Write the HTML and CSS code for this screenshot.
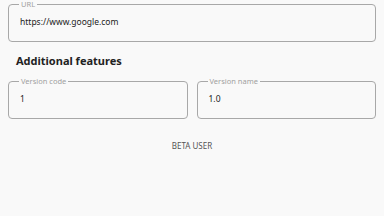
FILE: index.html
```html
<!DOCTYPE html>
<html>
  <head>
    <meta charset="UTF-8">
    <title>Settings</title>
    <link rel="stylesheet" href="styles.css">
  </head>
  <body>
    <div class="page">
      <fieldset class="field">
        <legend>URL</legend>
        <div class="value">https://www.google.com</div>
      </fieldset>

      <h2 class="section-title">Additional features</h2>

      <div class="row">
        <fieldset class="field">
          <legend>Version code</legend>
          <div class="value">1</div>
        </fieldset>
        <fieldset class="field">
          <legend>Version name</legend>
          <div class="value">1.0</div>
        </fieldset>
      </div>

      <div class="beta">BETA USER</div>
    </div>
  </body>
</html>
```

FILE: styles.css
```css
body {
  font-family: "Noto Sans", "Open Sans", sans-serif;
  margin: 0;
  background-color: #f9f9f9;
  color: #222;
}

.page {
  padding: 0 8px 0 8px;
}

.field {
  margin: 0;
  border: 1px solid #a8a8a8;
  border-radius: 4px;
  padding: 0 11px;
  height: 42px;
  box-sizing: border-box;
  min-width: 0;
}

.field legend {
  font-size: 7.5px;
  color: #a0a0a0;
  padding: 0 2px;
  margin-left: -1px;
  line-height: 8px;
}

.value {
  font-size: 8.5px;
  line-height: 10px;
  margin-top: 9px;
}

.section-title {
  font-size: 11px;
  font-weight: bold;
  margin: 12px 0 9px 8px;
  line-height: 14px;
}

.row {
  display: flex;
  gap: 9px;
}

.row .field {
  flex: 1;
}

.beta {
  text-align: center;
  font-size: 8px;
  line-height: 10px;
  color: #555;
  margin-top: 22px;
}
```
